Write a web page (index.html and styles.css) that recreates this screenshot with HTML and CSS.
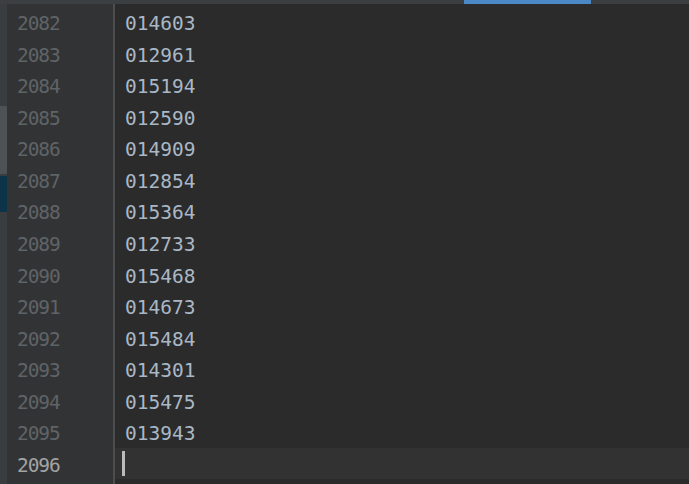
FILE: index.html
```html
<!DOCTYPE html>
<html lang="en">
<head>
	<meta charset="UTF-8">
	<title>editor</title>
	<link rel="stylesheet" href="styles.css">
</head>
<body>
	<div class="tabs">
		<span class="tab-on"></span>
	</div>
	<div class="main">
		<div class="strip">
			<b class="s-grey"></b>
			<b class="s-blue"></b>
		</div>
		<div class="gutter">
			<div class="ln">2082</div>
			<div class="ln">2083</div>
			<div class="ln">2084</div>
			<div class="ln">2085</div>
			<div class="ln">2086</div>
			<div class="ln">2087</div>
			<div class="ln">2088</div>
			<div class="ln">2089</div>
			<div class="ln">2090</div>
			<div class="ln">2091</div>
			<div class="ln">2092</div>
			<div class="ln">2093</div>
			<div class="ln">2094</div>
			<div class="ln">2095</div>
			<div class="ln cur">2096</div>
		</div>
		<div class="code">
			<div class="line">014603</div>
			<div class="line">012961</div>
			<div class="line">015194</div>
			<div class="line">012590</div>
			<div class="line">014909</div>
			<div class="line">012854</div>
			<div class="line">015364</div>
			<div class="line">012733</div>
			<div class="line">015468</div>
			<div class="line">014673</div>
			<div class="line">015484</div>
			<div class="line">014301</div>
			<div class="line">015475</div>
			<div class="line">013943</div>
			<div class="line cur"><i class="caret"></i></div>
		</div>
	</div>
</body>
</html>
```

FILE: styles.css
```css
*{
	margin:0;
	padding:0;
	box-sizing:border-box;
}
html, body{
	width:689px;
	height:484px;
	overflow:hidden;
	background:#2b2b2b;
}
body{
	font-family:"DejaVu Sans Mono", "Liberation Mono", monospace;
	font-size:19.5px;
}
.tabs{
	height:4px;
	background:#3c3f41;
	padding-left:464px;
}
.tab-on{
	display:block;
	width:127px;
	height:4px;
	background:#4a88c7;
}
.main{
	display:flex;
	height:480px;
}
.strip{
	width:7px;
	background:#3a3d3f;
	padding-top:102px;
}
.strip b{
	display:block;
}
.s-grey{
	height:68px;
	background:#4e5254;
}
.s-blue{
	height:36px;
	margin-top:2px;
	background:#0d3349;
}
.gutter{
	width:108px;
	background:#313335;
	border-right:2px solid #4b4d4f;
	padding-top:2px;
	padding-left:10px;
}
.ln, .line{
	height:31.57px;
	padding-top:5px;
	line-height:26.57px;
}
.ln{
	color:#606366;
	letter-spacing:-1.1px;
}
.ln.cur{
	color:#a4a3a3;
}
.code{
	flex:1;
	padding-top:2px;
}
.line{
	padding-left:10px;
	color:#a9b7c6;
}
.line.cur{
	display:flex;
	align-items:center;
	padding-top:0;
	background:#323232;
}
.caret{
	display:block;
	width:3px;
	height:25px;
	margin-left:-3px;
	background:#bbbbbb;
}
```
